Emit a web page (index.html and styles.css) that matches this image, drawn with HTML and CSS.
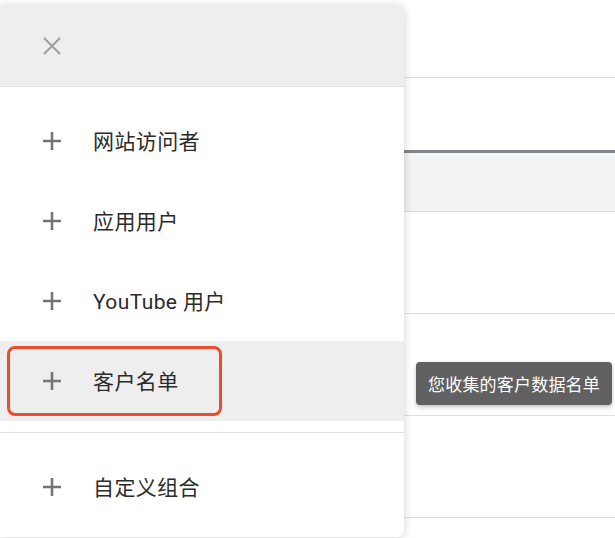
FILE: index.html
```html
<!DOCTYPE html>
<html lang="zh-CN">
<head>
  <meta charset="utf-8" />
  <title>受众群体</title>
  <meta name="viewport" content="width=device-width, initial-scale=1.0" />
  <link rel="stylesheet" href="styles.css">
</head>

<body>
  <div class="page">
    <div class="row row-top"></div>
    <div class="row row-tabs"></div>
    <div class="row row-head"></div>
    <div class="row row-data"></div>
    <div class="row row-data"></div>
    <div class="row row-data"></div>
    <div class="row row-last"></div>
  </div>

  <div class="panel">
    <div class="panel-header">
      <svg class="close-icon" viewBox="0 0 20 20" width="20" height="20">
        <path d="M2 2 L18 18 M18 2 L2 18" stroke="#9e9e9e" stroke-width="2" fill="none" />
      </svg>
    </div>

    <ul class="menu">
      <li class="menu-item">
        <svg class="plus-icon" viewBox="0 0 20 20" width="20" height="20"><path d="M10 1 V19 M1 10 H19" /></svg>
        <span>网站访问者</span>
      </li>
      <li class="menu-item">
        <svg class="plus-icon" viewBox="0 0 20 20" width="20" height="20"><path d="M10 1 V19 M1 10 H19" /></svg>
        <span>应用用户</span>
      </li>
      <li class="menu-item">
        <svg class="plus-icon" viewBox="0 0 20 20" width="20" height="20"><path d="M10 1 V19 M1 10 H19" /></svg>
        <span>YouTube 用户</span>
      </li>
      <li class="menu-item active">
        <svg class="plus-icon" viewBox="0 0 20 20" width="20" height="20"><path d="M10 1 V19 M1 10 H19" /></svg>
        <span>客户名单</span>
        <div class="highlight-box"></div>
      </li>
    </ul>

    <div class="menu-divider"></div>

    <ul class="menu">
      <li class="menu-item">
        <svg class="plus-icon" viewBox="0 0 20 20" width="20" height="20"><path d="M10 1 V19 M1 10 H19" /></svg>
        <span>自定义组合</span>
      </li>
    </ul>
  </div>

  <div class="tooltip">您收集的客户数据名单</div>
</body>
</html>
```

FILE: styles.css
```css
html, body {
  margin: 0;
  padding: 0;
  height: 100%;
  overflow: hidden;
  background-color: white;
  font-family: Roboto, "Noto Sans CJK SC", sans-serif;
}

.page {
  display: flex;
  flex-direction: column;
}

.row {
  border-bottom: 1px solid #e0e0e0;
  flex-shrink: 0;
}

.row-top {
  height: 77px;
}

.row-tabs {
  height: 72px;
  border-bottom: 3px solid #80868b;
}

.row-head {
  height: 58px;
  background-color: #f1f3f4;
  border-bottom-color: #dadce0;
}

.row-data {
  height: 101px;
}

.row-last {
  height: 40px;
  border-bottom: none;
}

.panel {
  position: absolute;
  top: 5px;
  left: 0;
  width: 404px;
  height: 532px;
  background-color: white;
  border-radius: 0 8px 8px 0;
  box-shadow: 0 1px 10px rgba(0, 0, 0, 0.18);
  overflow: hidden;
  z-index: 5;
}

.panel-header {
  height: 81px;
  display: flex;
  align-items: center;
  padding-left: 42px;
  background-color: #eeeeee;
  border-bottom: 1px solid #e0e0e0;
}

.close-icon {
  display: block;
}

.menu {
  list-style: none;
  margin: 0;
  padding: 0;
}

.menu:first-of-type {
  padding-top: 14px;
}

.menu-item {
  position: relative;
  display: flex;
  align-items: center;
  height: 80px;
  padding-left: 42px;
  color: #2b2b2b;
  font-size: 21px;
}

.menu-item span {
  margin-bottom: 3px;
  letter-spacing: 0.4px;
}

.menu-item.active {
  background-color: #eeeeee;
}

.plus-icon {
  display: block;
  margin-right: 31px;
  stroke: #757575;
  stroke-width: 2.6;
  fill: none;
}

.highlight-box {
  position: absolute;
  top: 5px;
  left: 7px;
  width: 209px;
  height: 64px;
  border: 3px solid #ee4a2c;
  border-radius: 8px;
  pointer-events: none;
}

.menu-divider {
  height: 1px;
  margin: 11px 0 14px;
  background-color: #e0e0e0;
}

.tooltip {
  position: absolute;
  top: 362px;
  left: 416px;
  width: 196px;
  height: 43px;
  display: flex;
  align-items: center;
  justify-content: center;
  background-color: #616161;
  color: white;
  font-size: 17px;
  letter-spacing: 0.2px;
  border-radius: 4px;
  box-shadow: 0 2px 4px rgba(0, 0, 0, 0.25);
  z-index: 10;
}
```
